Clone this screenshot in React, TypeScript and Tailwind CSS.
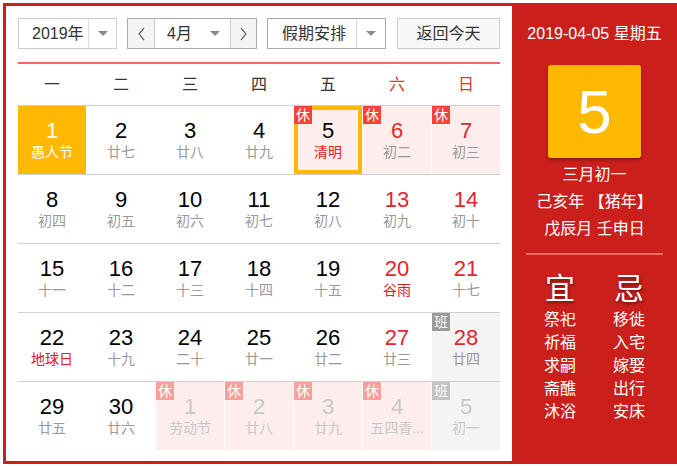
import React from "react";

type Cell = {
  d: number;
  l: string;
  red?: boolean;
  lred?: boolean;
  badge?: "休" | "班";
  faded?: boolean;
  sel?: boolean;
  today?: boolean;
};

const rows: Cell[][] = [
  [
    { d: 1, l: "愚人节", sel: true },
    { d: 2, l: "廿七" },
    { d: 3, l: "廿八" },
    { d: 4, l: "廿九" },
    { d: 5, l: "清明", lred: true, badge: "休", today: true },
    { d: 6, l: "初二", red: true, badge: "休" },
    { d: 7, l: "初三", red: true, badge: "休" },
  ],
  [
    { d: 8, l: "初四" },
    { d: 9, l: "初五" },
    { d: 10, l: "初六" },
    { d: 11, l: "初七" },
    { d: 12, l: "初八" },
    { d: 13, l: "初九", red: true },
    { d: 14, l: "初十", red: true },
  ],
  [
    { d: 15, l: "十一" },
    { d: 16, l: "十二" },
    { d: 17, l: "十三" },
    { d: 18, l: "十四" },
    { d: 19, l: "十五" },
    { d: 20, l: "谷雨", red: true, lred: true },
    { d: 21, l: "十七", red: true },
  ],
  [
    { d: 22, l: "地球日", lred: true },
    { d: 23, l: "十九" },
    { d: 24, l: "二十" },
    { d: 25, l: "廿一" },
    { d: 26, l: "廿二" },
    { d: 27, l: "廿三", red: true },
    { d: 28, l: "廿四", red: true, badge: "班" },
  ],
  [
    { d: 29, l: "廿五" },
    { d: 30, l: "廿六" },
    { d: 1, l: "劳动节", faded: true, badge: "休" },
    { d: 2, l: "廿八", faded: true, badge: "休" },
    { d: 3, l: "廿九", faded: true, badge: "休" },
    { d: 4, l: "五四青...", faded: true, badge: "休" },
    { d: 5, l: "初一", faded: true, badge: "班" },
  ],
];

const font = { fontFamily: '"Liberation Sans", "Noto Sans CJK SC", sans-serif' };

function Arrow() {
  return (
    <svg width="10" height="6" viewBox="0 0 10 6">
      <polygon points="0,0 10,0 5,5" fill="#8a8a8a" />
    </svg>
  );
}

function Chevron({ dir }: { dir: "l" | "r" }) {
  return (
    <svg width="9" height="14" viewBox="0 0 9 14">
      <polyline
        points={dir === "l" ? "7,1 2,7 7,13" : "2,1 7,7 2,13"}
        fill="none"
        stroke="#666"
        strokeWidth="1.2"
      />
    </svg>
  );
}

function DayCell({ c }: { c: Cell }) {
  let bg = "bg-white";
  if (c.sel) bg = "bg-[#ffb800]";
  else if (c.badge === "休") bg = "bg-[#fdeeed]";
  else if (c.badge === "班") bg = "bg-[#f4f4f4]";

  let numColor = "text-black";
  if (c.sel) numColor = "text-white";
  else if (c.faded) numColor = "text-[#c8c8c8]";
  else if (c.red) numColor = "text-[#e3262e]";

  let lunColor = "text-[#999999]";
  if (c.sel) lunColor = "text-white";
  else if (c.faded) lunColor = "text-[#c8c8c8]";
  else if (c.lred) lunColor = "text-[#e02020]";

  let badgeBg = "";
  if (c.badge === "休") badgeBg = c.faded ? "bg-[#f9a09a]" : "bg-[#f4433a]";
  if (c.badge === "班") badgeBg = c.faded ? "bg-[#c2c2c2]" : "bg-[#9a9a9a]";

  return (
    <div className={`relative h-[68px] flex flex-col items-center pt-[13px] ${bg}`}>
      <div className={`text-[22px] leading-[24px] ${numColor}`}>{c.d}</div>
      <div className={`text-[14px] leading-[18px] whitespace-nowrap ${lunColor}`}>{c.l}</div>
      {c.today && <div className="absolute inset-0 border-4 border-[#ffb800]" />}
      {c.badge && (
        <div
          className={`absolute left-0 top-0 w-[18px] h-[18px] flex items-center justify-center text-white text-[14px] leading-[18px] ${badgeBg}`}
        >
          {c.badge}
        </div>
      )}
    </div>
  );
}

export default function App() {
  const weekdays = ["一", "二", "三", "四", "五", "六", "日"];
  const yi = ["祭祀", "祈福", "求嗣", "斋醮", "沐浴"];
  const ji = ["移徙", "入宅", "嫁娶", "出行", "安床"];
  return (
    <div className="w-[677px] h-[467px] bg-white pt-[3px] pl-[3px]" style={font}>
      <div className="flex w-[674px] h-[461px] bg-[#ca1f1b]">
        {/* left panel */}
        <div className="w-[506px] h-[455px] mt-[3px] ml-[3px] bg-white px-[12px] pt-[12px]">
          {/* controls */}
          <div className="flex h-[31px] text-[16px] text-[#333]">
            <div className="flex w-[99px] h-[31px] border border-[#cccccc] bg-white">
              <div className="w-[69px] flex items-center pl-[13px]">2019年</div>
              <div className="flex-1 border-l border-[#dddddd] flex items-center justify-center">
                <Arrow />
              </div>
            </div>
            <div className="ml-[10px] flex w-[130px] h-[31px] border border-[#aaaaaa]">
              <div className="w-[27px] bg-[#f5f5f5] flex items-center justify-center border-r border-[#cccccc]">
                <Chevron dir="l" />
              </div>
              <div className="w-[75px] bg-white flex items-center pl-[12px] pr-[10px] justify-between">
                <span>4月</span>
                <Arrow />
              </div>
              <div className="flex-1 bg-[#f5f5f5] flex items-center justify-center border-l border-[#cccccc]">
                <Chevron dir="r" />
              </div>
            </div>
            <div className="ml-[10px] flex w-[119px] h-[31px] border border-[#aaaaaa] bg-white">
              <div className="w-[88px] flex items-center pl-[14px]">假期安排</div>
              <div className="flex-1 border-l border-[#dddddd] flex items-center justify-center">
                <Arrow />
              </div>
            </div>
            <div className="ml-[11px] w-[103px] h-[31px] border border-[#cccccc] bg-[#f7f7f7] flex items-center justify-center">
              返回今天
            </div>
          </div>
          {/* red line */}
          <div className="mt-[13px] h-[2px] bg-[#f2695c]" />
          {/* weekday header */}
          <div className="grid grid-cols-[repeat(7,68px)] gap-x-px h-[41px] items-center text-[16px]">
            {weekdays.map((w, i) => (
              <div key={w} className={`text-center ${i >= 5 ? "text-[#e8362e]" : "text-[#333]"}`}>
                {w}
              </div>
            ))}
          </div>
          {/* grid */}
          {rows.map((r, ri) => (
            <div key={ri} className="border-t border-[#cfcfcf] grid grid-cols-[repeat(7,68px)] gap-x-px">
              {r.map((c, ci) => (
                <DayCell key={ci} c={c} />
              ))}
            </div>
          ))}
        </div>
        {/* right panel */}
        <div className="w-[165px] flex flex-col items-center pt-[21px] text-white">
          <div className="text-[16px] leading-[20px] whitespace-nowrap">2019-04-05 星期五</div>
          <div className="mt-[21px] w-[93px] h-[93px] rounded-[3px] bg-[#ffb800] shadow-[0_2px_3px_rgba(0,0,0,0.35)] flex items-center justify-center text-[62px] leading-none">
            5
          </div>
          <div className="mt-[3px] text-[16px] leading-[27px] text-center whitespace-nowrap">
            <div>三月初一</div>
            <div>己亥年 【猪年】</div>
            <div>戊辰月 壬申日</div>
          </div>
          <div className="mt-[11px] w-[137px] h-[2px] bg-[#ee6a5e]" />
          <div className="mt-[16px] flex">
            <div className="w-[69px] flex flex-col items-center">
              <div className="text-[30px] leading-[36px] [text-shadow:1px_2px_3px_rgba(0,0,0,0.45)]">宜</div>
              <div className="mt-[1px] text-[16px] leading-[23px] text-center">
                {yi.map((t) => (
                  <div key={t}>{t}</div>
                ))}
              </div>
            </div>
            <div className="w-[69px] flex flex-col items-center">
              <div className="text-[30px] leading-[36px] [text-shadow:1px_2px_3px_rgba(0,0,0,0.45)]">忌</div>
              <div className="mt-[1px] text-[16px] leading-[23px] text-center">
                {ji.map((t) => (
                  <div key={t}>{t}</div>
                ))}
              </div>
            </div>
          </div>
        </div>
      </div>
    </div>
  );
}
